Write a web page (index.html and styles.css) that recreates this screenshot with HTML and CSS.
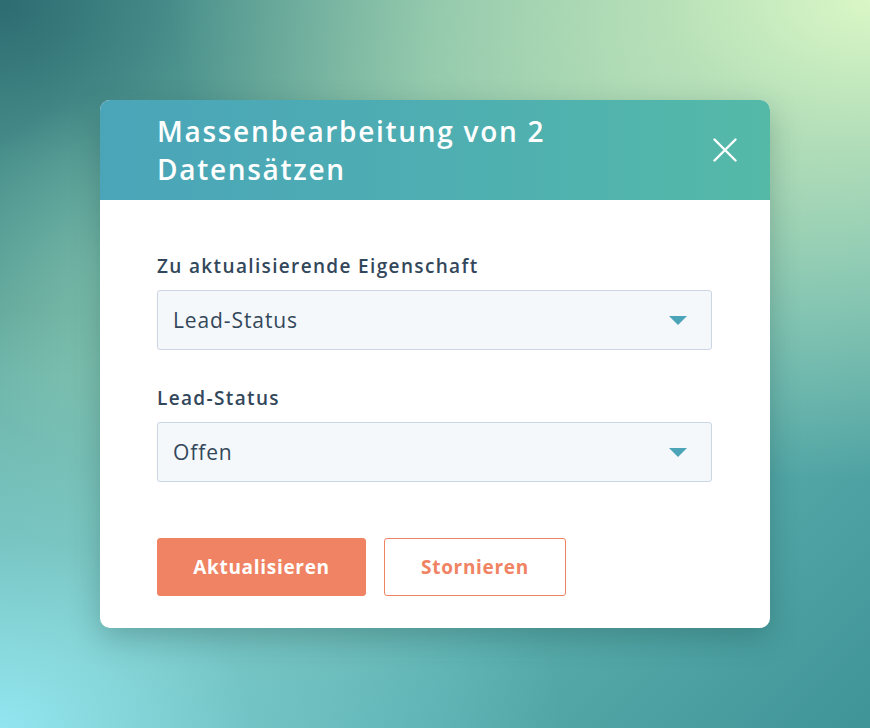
FILE: index.html
```html
<!DOCTYPE html>
<html lang="de">
<head>
<meta charset="utf-8">
<title>Massenbearbeitung</title>
<link rel="stylesheet" href="styles.css">
</head>
<body>
<div class="stage">
  <div class="modal">
    <div class="modal-header">
      <h1 class="modal-title">Massenbearbeitung von 2 Datensätzen</h1>
      <button class="close" aria-label="Schließen">
        <svg width="24" height="24" viewBox="0 0 24 24"><path d="M1.5 1.5 L22.5 22.5 M22.5 1.5 L1.5 22.5" stroke="#fff" stroke-width="2.4" stroke-linecap="round" fill="none"/></svg>
      </button>
    </div>
    <div class="modal-body">
      <div class="field">
        <label class="label">Zu aktualisierende Eigenschaft</label>
        <div class="select"><span>Lead-Status</span><span class="caret"></span></div>
      </div>
      <div class="field">
        <label class="label">Lead-Status</label>
        <div class="select"><span>Offen</span><span class="caret"></span></div>
      </div>
      <div class="actions">
        <button class="btn btn-primary">Aktualisieren</button>
        <button class="btn btn-secondary">Stornieren</button>
      </div>
    </div>
  </div>
</div>
</body>
</html>
```
FILE: styles.css
```css
* { box-sizing: border-box; }
html, body { margin: 0; padding: 0; }
body {
  width: 870px;
  height: 728px;
  overflow: hidden;
  font-family: "Open Sans", "DejaVu Sans", sans-serif;
}
.stage {
  width: 870px;
  height: 728px;
  padding: 100px 100px 0 100px;
  background:
    radial-gradient(ellipse 170px 190px at 120px 280px, rgba(150, 215, 190, 0.45), rgba(150, 215, 190, 0) 100%),
    radial-gradient(ellipse 700px 480px at 870px 0px, rgba(218, 247, 198, 1) 0%, rgba(196, 232, 188, 0.8) 30%, rgba(150, 200, 170, 0) 100%),
    radial-gradient(ellipse 560px 420px at 0px 728px, rgba(146, 230, 240, 1) 0%, rgba(120, 205, 215, 0.6) 45%, rgba(110, 195, 200, 0) 100%),
    radial-gradient(ellipse 440px 380px at 0px 0px, rgba(45, 108, 113, 1) 0%, rgba(60, 130, 130, 0.6) 45%, rgba(80, 150, 150, 0) 100%),
    linear-gradient(135deg, #55a09a 0%, #82bfa6 45%, #5aaeac 70%, #3f9498 100%);
}
.modal {
  width: 670px;
  background: #fff;
  border-radius: 10px;
  overflow: hidden;
  box-shadow: 0 10px 30px rgba(20, 60, 60, 0.28);
}
.modal-header {
  height: 100px;
  background: linear-gradient(90deg, #4aa5b9 0%, #4fb0b0 60%, #55b9a8 100%);
  display: flex;
  align-items: center;
  justify-content: space-between;
  padding: 0 33px 0 57px;
}
.modal-title {
  margin: 0;
  width: 440px;
  color: #fff;
  font-size: 28px;
  font-weight: 600;
  line-height: 38px;
  letter-spacing: 1.7px;
}
.close {
  background: none;
  border: 0;
  padding: 0;
  width: 24px;
  height: 24px;
  display: flex;
  cursor: pointer;
}
.modal-body {
  padding: 54px 58px 32px 57px;
}
.field { margin-bottom: 36px; }
.label {
  display: block;
  color: #33475b;
  font-size: 19px;
  font-weight: 600;
  line-height: 24px;
  margin-bottom: 12px;
  letter-spacing: 1.35px;
}
.select {
  height: 60px;
  background: #f5f8fa;
  border: 1px solid #cbd6e2;
  border-radius: 3px;
  display: flex;
  align-items: center;
  justify-content: space-between;
  padding: 0 24px 0 15px;
  color: #33475b;
  font-size: 21px;
  letter-spacing: 0.9px;
}
.caret {
  width: 0;
  height: 0;
  border-left: 9px solid transparent;
  border-right: 9px solid transparent;
  border-top: 9px solid #4ba4b8;
}
.actions {
  display: flex;
  gap: 18px;
  margin-top: 56px;
}
.btn {
  height: 58px;
  border-radius: 3px;
  font-family: inherit;
  font-size: 19px;
  font-weight: 700;
  letter-spacing: 0.7px;
  cursor: pointer;
}
.btn-primary {
  width: 209px;
  background: #ef8363;
  border: 1px solid #ef8363;
  color: #fff;
}
.btn-secondary {
  width: 182px;
  background: #fff;
  border: 1px solid #ef8363;
  color: #ef8363;
}
```
